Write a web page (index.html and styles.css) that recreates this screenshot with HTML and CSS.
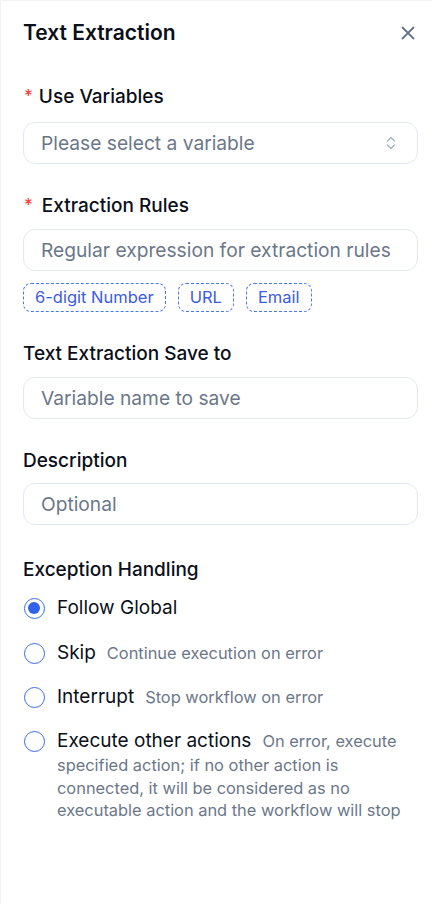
FILE: index.html
```html
<!DOCTYPE html>
<html>
<head>
<meta charset="utf-8">
<link rel="stylesheet" href="styles.css">
</head>
<body>
<div class="panel">
  <header class="head">
    <h1 class="title">Text Extraction</h1>
    <button class="close" aria-label="Close">
      <svg width="14" height="14" viewBox="0 0 14 14"><path d="M1.5 1.5 L12.5 12.5 M12.5 1.5 L1.5 12.5" stroke="#64748b" stroke-width="1.8" stroke-linecap="round" fill="none"/></svg>
    </button>
  </header>

  <div class="field f1">
    <div class="label"><span class="star">*</span>Use Variables</div>
    <div class="box select">
      <span class="ph">Please select a variable</span>
      <svg class="chev" width="10" height="14" viewBox="0 0 10 14"><path d="M1.5 5 L5 1.5 L8.5 5 M1.5 9 L5 12.5 L8.5 9" stroke="#a3adbd" stroke-width="1.2" fill="none" stroke-linecap="round" stroke-linejoin="round"/></svg>
    </div>
  </div>

  <div class="field">
    <div class="label"><span class="star star-wide">*</span>Extraction Rules</div>
    <div class="box"><span class="ph">Regular expression for extraction rules</span></div>
    <div class="tags">
      <span class="tag">6-digit Number</span>
      <span class="tag">URL</span>
      <span class="tag">Email</span>
    </div>
  </div>

  <div class="field">
    <div class="label">Text Extraction Save to</div>
    <div class="box"><span class="ph">Variable name to save</span></div>
  </div>

  <div class="field">
    <div class="label">Description</div>
    <div class="box"><span class="ph">Optional</span></div>
  </div>

  <div class="field f5">
    <div class="label">Exception Handling</div>
    <div class="radios">
      <div class="radio-row">
        <span class="radio checked"></span>
        <div class="rtext"><span class="rlabel">Follow Global</span></div>
      </div>
      <div class="radio-row">
        <span class="radio"></span>
        <div class="rtext"><span class="rlabel">Skip</span><span class="rdesc">Continue execution on error</span></div>
      </div>
      <div class="radio-row">
        <span class="radio"></span>
        <div class="rtext"><span class="rlabel">Interrupt</span><span class="rdesc">Stop workflow on error</span></div>
      </div>
      <div class="radio-row">
        <span class="radio"></span>
        <div class="rtext"><span class="rlabel">Execute other actions</span><span class="rdesc">On error, execute specified action; if no other action is connected, it will be considered as no executable action and the workflow will stop</span></div>
      </div>
    </div>
  </div>
</div>
</body>
</html>
```

FILE: styles.css
```css
* { box-sizing: border-box; }
html, body {
  margin: 0;
  padding: 0;
  height: 100%;
  background: #f1f2f4;
}
body {
  font-family: Inter, "Noto Sans", sans-serif;
  color: #0b0f19;
}
.panel {
  margin-left: 1px;
  margin-top: 1px;
  min-height: 903px;
  background: #ffffff;
  padding: 18px 14px 0 22px;
}
.head {
  display: flex;
  align-items: center;
  justify-content: space-between;
  height: 28px;
}
.title {
  margin: 0;
  font-size: 21px;
  line-height: 28px;
  font-weight: 600;
  color: #0b0f19;
}
.close {
  border: 0;
  background: none;
  padding: 0;
  margin-right: 3px;
  width: 14px;
  height: 14px;
  display: flex;
}
.field { margin-top: 30px; }
.field.f1 { margin-top: 37.5px; }
.field.f5 { margin-top: 33px; }
.label {
  font-size: 19px;
  line-height: 24px;
  font-weight: 500;
  color: #0b0f19;
  margin-bottom: 10.7px;
  display: flex;
  align-items: center;
}
.f1 .label { margin-bottom: 13.5px; }
.star {
  color: #ef4444;
  font-size: 17px;
  margin-left: 1px;
  margin-right: 6px;
  position: relative;
  top: -1px;
}
.star.star-wide { margin-right: 9px; }
.box {
  height: 42px;
  border: 1px solid #e2e8f0;
  border-radius: 12px;
  padding: 0 17px;
  display: flex;
  align-items: center;
  justify-content: space-between;
  background: #fff;
}
.ph {
  font-size: 19.2px;
  color: #6b7789;
  white-space: nowrap;
}
.chev { margin-right: 4px; }
.tags {
  display: flex;
  gap: 12px;
  margin-top: 12.3px;
}
.tag {
  height: 29px;
  border: 1px dashed #4a78f0;
  border-radius: 8px;
  padding: 0 11px;
  display: flex;
  align-items: center;
  font-size: 16.5px;
  color: #3d5be0;
}
.f5 .label { margin-bottom: 0; }
.radios {
  display: flex;
  flex-direction: column;
  gap: 19.6px;
  margin-top: 14px;
}
.radio-row {
  display: flex;
  align-items: flex-start;
}
.radio {
  flex: none;
  width: 21px;
  height: 21px;
  border-radius: 50%;
  border: 1.5px solid #3b6cf0;
  margin-top: 1.9px;
  margin-left: 0.5px;
  margin-right: 12.5px;
  position: relative;
  background: #fff;
}
.radio.checked::after {
  content: "";
  position: absolute;
  left: 3px;
  top: 3px;
  width: 12px;
  height: 12px;
  border-radius: 50%;
  background: #2f63ea;
}
.rtext {
  line-height: 22.7px;
  flex: 1;
}
.rlabel {
  font-size: 19px;
  line-height: 24.7px;
  color: #0b0f19;
}
.rdesc {
  font-size: 16.4px;
  color: #6b7789;
  margin-left: 11px;
}
```
